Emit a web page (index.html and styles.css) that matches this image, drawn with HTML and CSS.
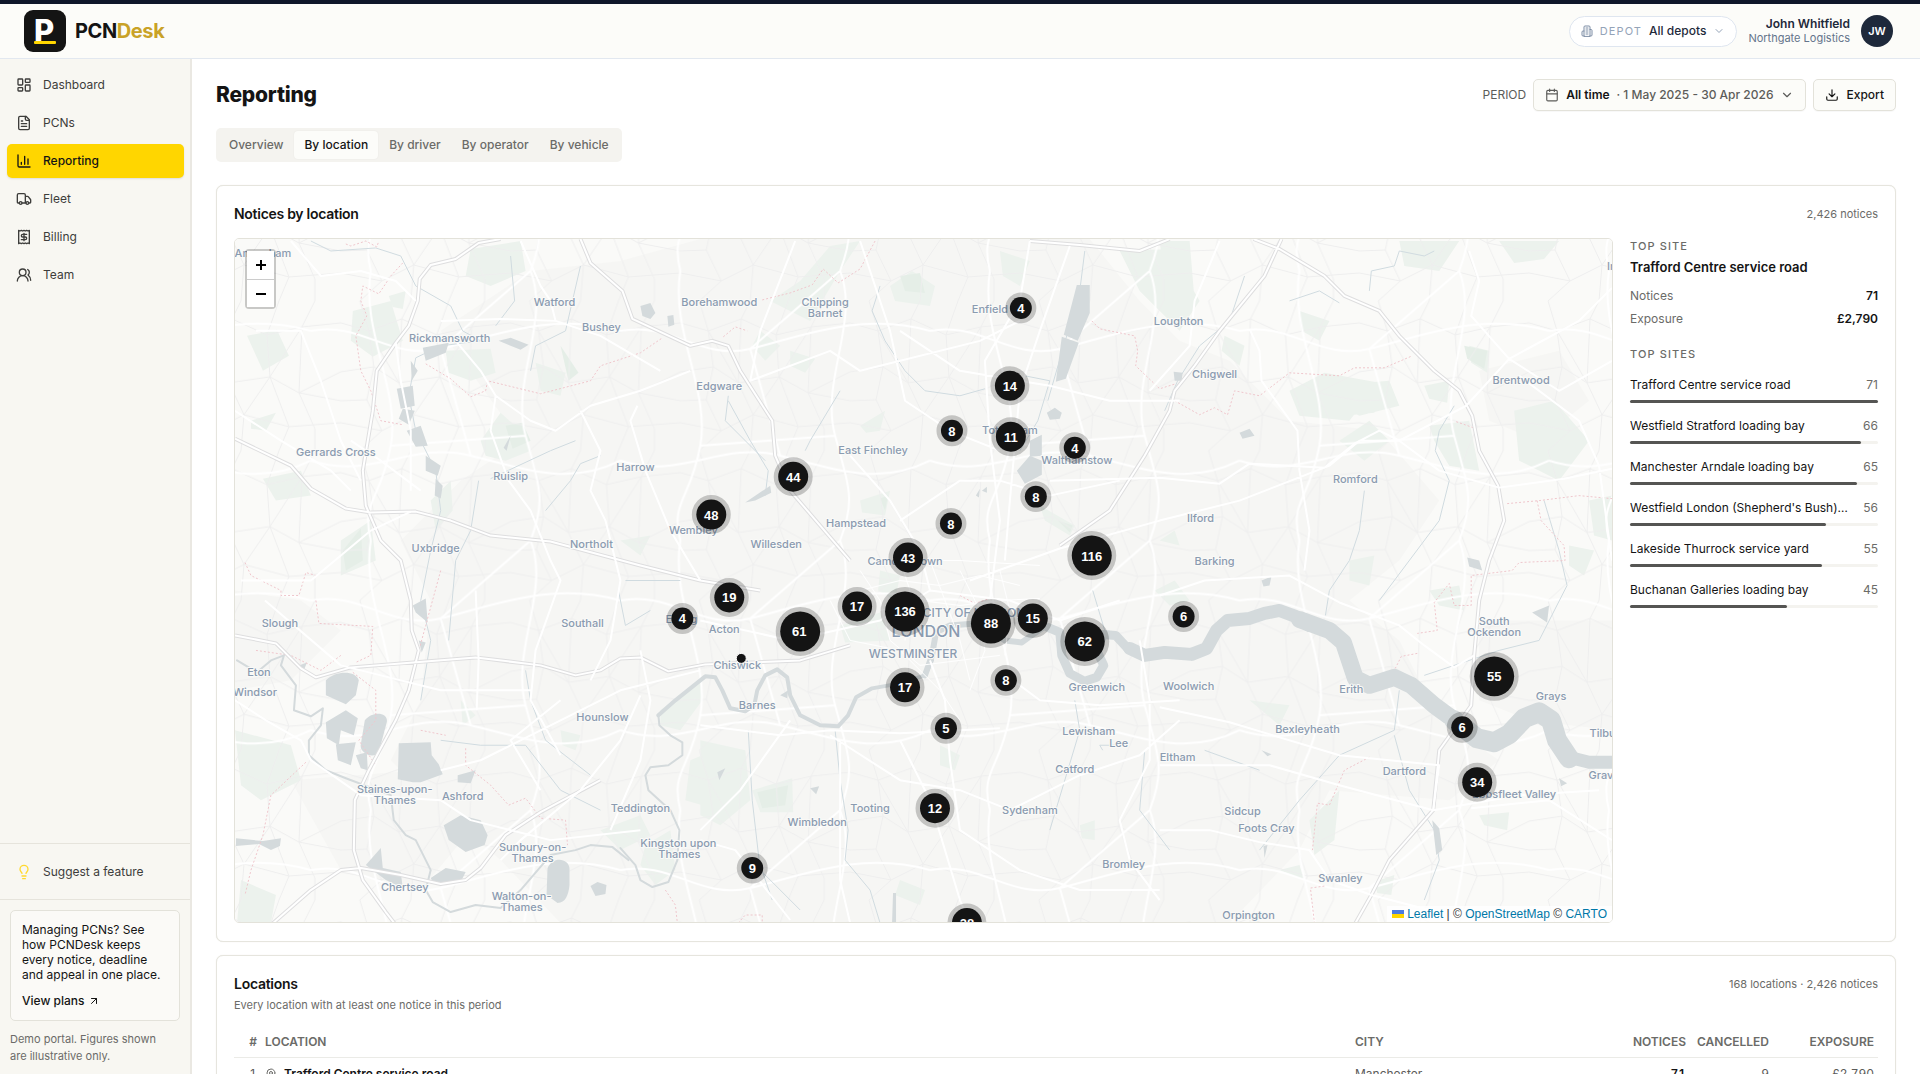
FILE: index.html
```html
<!DOCTYPE html>
<html lang="en">
<head>
<meta charset="utf-8">
<meta name="viewport" content="width=device-width, initial-scale=1">
<title>PCNDesk – Reporting by location</title>
<link rel="stylesheet" href="styles.css">
</head>
<body>
<svg class="sprite" aria-hidden="true">
  <symbol id="i-dash" viewBox="0 0 24 24"><rect x="3" y="3" width="7" height="9" rx="1"/><rect x="14" y="3" width="7" height="5" rx="1"/><rect x="14" y="12" width="7" height="9" rx="1"/><rect x="3" y="16" width="7" height="5" rx="1"/></symbol>
  <symbol id="i-file" viewBox="0 0 24 24"><path d="M15 2H6a2 2 0 0 0-2 2v16a2 2 0 0 0 2 2h12a2 2 0 0 0 2-2V7Z"/><path d="M14 2v4a2 2 0 0 0 2 2h4M10 9H8M16 13H8M16 17H8"/></symbol>
  <symbol id="i-chart" viewBox="0 0 24 24"><path d="M3 3v16a2 2 0 0 0 2 2h16M18 17V9M13 17V5M8 17v-3"/></symbol>
  <symbol id="i-truck" viewBox="0 0 24 24"><path d="M14 18V6a2 2 0 0 0-2-2H4a2 2 0 0 0-2 2v11a1 1 0 0 0 1 1h2M15 18H9M19 18h2a1 1 0 0 0 1-1v-3.65a1 1 0 0 0-.22-.62l-3.48-4.35A1 1 0 0 0 17.52 8H14"/><circle cx="17" cy="18" r="2"/><circle cx="7" cy="18" r="2"/></symbol>
  <symbol id="i-receipt" viewBox="0 0 24 24"><path d="M4 2v20l2-1 2 1 2-1 2 1 2-1 2 1 2-1 2 1V2l-2 1-2-1-2 1-2-1-2 1-2-1-2 1Z"/><path d="M16 8h-6a2 2 0 1 0 0 4h4a2 2 0 1 1 0 4H8M12 17.500V6.500"/></symbol>
  <symbol id="i-users" viewBox="0 0 24 24"><path d="M18 21a8 8 0 0 0-16 0"/><circle cx="10" cy="8" r="5"/><path d="M22 20c0-3.370-2-6.500-4-8a5 5 0 0 0-.45-8.300"/></symbol>
  <symbol id="i-bulb" viewBox="0 0 24 24"><path d="M15 14c.2-1 .7-1.700 1.500-2.500 1-.9 1.500-2.200 1.500-3.500A6 6 0 0 0 6 8c0 1 .2 2.200 1.500 3.500.7.7 1.300 1.500 1.500 2.500M9 18h6M10 22h4"/></symbol>
  <symbol id="i-building" viewBox="0 0 24 24"><path d="M6 22V4a2 2 0 0 1 2-2h8a2 2 0 0 1 2 2v18ZM6 12H4a2 2 0 0 0-2 2v6a2 2 0 0 0 2 2h2M18 9h2a2 2 0 0 1 2 2v9a2 2 0 0 1-2 2h-2M10 6h4M10 10h4M10 14h4M10 18h4"/></symbol>
  <symbol id="i-down" viewBox="0 0 24 24"><path d="m6 9 6 6 6-6"/></symbol>
  <symbol id="i-cal" viewBox="0 0 24 24"><path d="M8 2v4M16 2v4M3 10h18"/><rect x="3" y="4" width="18" height="18" rx="2"/></symbol>
  <symbol id="i-export" viewBox="0 0 24 24"><path d="M21 15v4a2 2 0 0 1-2 2H5a2 2 0 0 1-2-2v-4M7 10l5 5 5-5M12 15V3"/></symbol>
  <symbol id="i-out" viewBox="0 0 24 24"><path d="M7 7h10v10M7 17 17 7"/></symbol>
  <symbol id="i-pin" viewBox="0 0 24 24"><path d="M20 10c0 5-5.500 10.200-7.400 11.800a1 1 0 0 1-1.200 0C9.500 20.200 4 15 4 10a8 8 0 0 1 16 0"/><circle cx="12" cy="10" r="3"/></symbol>
</svg>

<header class="topbar">
  <a class="brand" href="#">
    <svg class="brand-mark" viewBox="0 0 42 42" aria-hidden="true"><rect width="42" height="42" rx="9" fill="#141414"/><text x="10" y="32" class="brand-letter">P</text><rect x="10" y="31" width="22" height="3" rx="1" fill="#ffd600"/></svg>
    <span class="brand-name">PCN<span>Desk</span></span>
  </a>
  <div class="account">
    <button class="depot" type="button"><svg class="icon"><use href="#i-building"/></svg><span class="depot-label">DEPOT</span><span class="depot-value">All depots</span><svg class="icon chev"><use href="#i-down"/></svg></button>
    <div class="user"><strong>John Whitfield</strong><span>Northgate Logistics</span></div>
    <span class="avatar">JW</span>
  </div>
</header>

<div class="shell">
  <aside class="sidebar">
    <nav class="nav" aria-label="Main">
      <a href="#"><svg class="icon"><use href="#i-dash"/></svg>Dashboard</a>
      <a href="#"><svg class="icon"><use href="#i-file"/></svg>PCNs</a>
      <a href="#" class="active" aria-current="page"><svg class="icon"><use href="#i-chart"/></svg>Reporting</a>
      <a href="#"><svg class="icon"><use href="#i-truck"/></svg>Fleet</a>
      <a href="#"><svg class="icon"><use href="#i-receipt"/></svg>Billing</a>
      <a href="#"><svg class="icon"><use href="#i-users"/></svg>Team</a>
    </nav>
    <div class="suggest"><a href="#"><svg class="icon"><use href="#i-bulb"/></svg>Suggest a feature</a></div>
    <div class="side-foot">
      <div class="promo">
        <p>Managing PCNs? See how PCNDesk keeps every notice, deadline and appeal in one place.</p>
        <a href="#">View plans <svg class="icon"><use href="#i-out"/></svg></a>
      </div>
      <p class="demo">Demo portal. Figures shown are illustrative only.</p>
    </div>
  </aside>

  <main class="main">
    <div class="page-head">
      <h1>Reporting</h1>
      <div class="tools">
        <span class="period-label" id="period">PERIOD</span>
        <button class="btn period" type="button" aria-describedby="period"><svg class="icon"><use href="#i-cal"/></svg><span class="strong">All time</span><span class="range">· 1 May 2025 - 30 Apr 2026</span><svg class="icon chev"><use href="#i-down"/></svg></button>
        <button class="btn" type="button"><svg class="icon"><use href="#i-export"/></svg>Export</button>
      </div>
    </div>

    <div class="tabs" role="tablist">
      <button type="button" role="tab">Overview</button>
      <button type="button" role="tab" class="active" aria-selected="true">By location</button>
      <button type="button" role="tab">By driver</button>
      <button type="button" role="tab">By operator</button>
      <button type="button" role="tab">By vehicle</button>
    </div>

    <section class="card">
      <div class="card-head"><h2>Notices by location</h2><span class="meta">2,426 notices</span></div>
      <div class="location-grid">
        <div class="map">
          <svg class="map-canvas" viewBox="234 238 1379 684" preserveAspectRatio="xMidYMid slice" role="img" aria-label="Map of notices across London">
            <defs>
              <pattern id="streets" width="170" height="150" patternUnits="userSpaceOnUse">
                <path class="lane" d="M0 22 28 30 61 18 96 34 131 26 170 22M0 71 33 66 58 82 99 76 128 92 170 71M0 122 41 130 73 114 118 126 170 122M19 0 28 30 33 66 26 99 41 130 19 150M61 18 70 0M61 18 58 82 73 114 70 150M96 34 108 0M96 34 99 76 118 126 108 150M131 26 144 0M131 26 128 92 144 128 144 150M28 30 58 82M99 76 131 26M73 114 99 76M128 92 170 100M0 100 26 99"/>
              </pattern>
              <pattern id="avenues" width="310" height="270" patternUnits="userSpaceOnUse">
                <path class="avenue" d="M0 60C50 50 80 90 130 78S240 40 310 60M0 190C60 210 100 170 160 185S260 215 310 190M60 0C50 60 90 120 80 175S50 230 60 270M220 0C240 50 200 110 215 165S235 230 220 270M130 78 160 185M80 175 215 165M130 78 220 0"/>
              </pattern>
            </defs>
            <rect x="234" y="238" width="1379" height="685" fill="#fafaf8"/>
            <path class="urban" d="M440 330 530 270 620 260 700 238H1090L1140 300 1180 340 1230 360 1290 420 1380 430 1440 500 1400 560 1350 600 1400 640 1440 720 1500 760 1450 800 1330 790 1300 850 1230 923H560L500 860 430 800 390 760 420 700 430 600 400 540 460 480 520 440ZM234 590 300 600 340 630 290 680 234 690ZM1480 370 1560 350 1590 400 1540 440 1490 420ZM1480 620 1613 620V730L1530 720 1480 700ZM290 780 420 770 470 830 420 890 340 870Z"/>
            <path class="green" d="M246 335 276 329 288 355 262 370ZM352 310 390 300 402 340 372 356 350 340ZM388 295 405 290 402 308 392 306ZM445 350 490 348 495 372 470 380 448 372ZM470 248 520 240 525 270 490 285 465 275ZM535 362 565 372 560 395 540 390ZM480 440 500 412 520 430 530 450 505 460 485 455ZM340 540 370 520 375 560 340 575ZM250 420 275 412 265 430 250 428ZM262 478 300 470 310 495 275 500ZM430 500 450 480 452 510 435 530ZM234 730 290 745 300 780 260 800 240 785ZM240 880 275 895 270 923H236ZM660 710 700 680 702 700 680 730 660 725ZM700 740 745 750 750 800 720 825 700 815ZM752 790 792 778 793 812 760 812ZM645 845 670 830 675 870 655 885 640 865ZM600 830 640 815 650 835 620 850ZM690 760 702 755 702 805 685 800ZM810 320 840 270 860 240 830 245 800 280 770 300ZM890 285 912 270 935 285 930 305 895 300ZM860 425 885 410 880 430 866 432ZM860 500 890 490 885 515 862 512ZM840 625 880 612 890 640 845 642ZM880 570 900 575 895 600 878 590ZM1040 505 1075 525 1070 535 1045 520ZM1120 250 1170 248 1200 300 1180 330 1140 290ZM1160 240H1190L1195 300 1170 320ZM1225 335 1245 345 1240 365 1222 350ZM1330 385 1390 380 1400 405 1360 415 1335 402ZM1350 400 1378 395 1375 412 1355 414ZM1290 390 1325 372 1380 382 1350 420 1300 415ZM1425 385 1450 380 1448 402 1430 398ZM1470 345 1490 350 1488 372 1472 362ZM1515 410 1555 400 1590 440 1560 480 1520 460ZM1430 425 1470 420 1480 470 1450 465 1435 440ZM1340 440 1370 420 1390 440 1365 460ZM1400 240 1460 240 1440 270 1405 265ZM1430 590 1460 585 1465 610 1440 605ZM1350 560 1375 555 1370 585 1350 580ZM1310 820 1340 790 1335 840 1315 855ZM1375 882 1395 875 1392 895 1378 893ZM1280 870 1300 865 1305 880ZM1155 590 1175 580 1190 600 1170 605ZM940 745 960 755 955 770 940 765ZM1080 825 1095 820 1095 840 1082 838ZM900 880 925 890 920 905 895 895ZM1160 540 1175 530 1180 545ZM1250 700 1290 705 1280 725ZM1480 815 1510 812 1508 830 1485 825ZM560 730 580 735 575 750 562 745ZM460 700 475 715 462 725ZM620 540 650 535 640 555ZM760 330 780 345 765 360 752 345ZM790 350 815 358 805 372 790 365ZM1000 250 1030 260 1020 285 1003 275ZM1300 310 1330 320 1320 340 1302 330ZM1590 500 1613 495V540L1595 535ZM1570 545 1595 550 1585 575 1570 565ZM1500 240 1560 240 1545 258 1515 262Z"/>
            <path class="green deep" d="M342 550 360 528 362 560 345 570ZM505 425 522 422 530 440 512 448ZM757 792 788 785 785 805 762 808ZM1465 345 1488 350 1485 368 1468 358ZM900 275 920 272 925 292 905 290ZM1058 520 1073 525 1070 532ZM880 498 888 495 885 510ZM560 345 578 372 568 380Z"/>
            <rect x="234" y="238" width="1379" height="685" fill="url(#streets)"/>
            <rect x="234" y="238" width="1379" height="685" fill="url(#avenues)"/>
            <path class="brook" d="M310 240 330 250 375 247 400 255 415 285 450 305 462 330 480 340M510 255 514 300 495 325M580 265 565 330 535 345 530 370M480 340 440 345 415 357 408 395 415 430 435 470 440 510 430 550 420 600 430 640 420 700M545 510 570 480 580 463 600 455M490 478 550 450 575 440M478 480 470 530 455 560 448 640M880 285 872 310 885 340 905 370 925 390 960 395 985 388M840 390 810 440 805 450M728 400 750 440 768 470 765 495M728 395 725 420 765 460M1025 375 1050 380 1038 420 1020 450M1085 250 1080 290 1048 400M1245 275 1230 320 1200 345 1178 380 1165 410M1290 300 1320 290 1340 302M1370 290 1372 270 1395 265 1400 250 1425 255 1435 250M1455 405 1440 430 1436 450 1450 480 1440 520 1380 600M1365 490 1360 530 1350 560 1330 590 1326 615M1545 500 1560 550 1568 585 1540 640 1500 650 1425 675M1400 690 1395 730 1340 755 1300 800 1260 850M1395 735 1410 790 1435 830 1440 860 1425 900M1093 590 1105 630M1075 700 1080 730 1068 770 1050 830M1145 750 1140 810 1170 850M835 730 840 780 848 830 845 860 870 890 880 923M748 730 752 800 760 870 800 910M618 590 625 625 650 610M525 670 530 700 545 740 590 775M440 740 480 745 525 745 560 790 600 810M1205 750 1260 770M1120 745H1100L1103 750M625 580H680M760 865 772 900"/>
            <path class="water" d="M422 347 448 342 445 352 425 360ZM410 360 417 370 411 380ZM396 388 412 385 414 405 400 408ZM402 408 414 410 408 424 398 418ZM406 430 420 425 427 445 415 446ZM425 455 440 465 437 475 425 470ZM435 478 442 485 440 498 434 495ZM498 340 510 337 528 344 520 349ZM640 305 650 302 655 312 650 318 642 315ZM667 315 673 314 674 324 668 326ZM503 447 510 435 506 450ZM325 680C335 670 355 670 358 680L355 695 345 704 325 695ZM364 720C372 710 388 712 386 722L378 752C372 760 358 752 360 744ZM398 743 430 742 431 755 438 764 442 774 420 782H412L397 779ZM325 722 345 710 357 718 353 735 340 730 338 745 326 738ZM335 744 355 742 350 765 337 760ZM355 755 366 752 367 770 360 768ZM443 825 460 815 480 820 487 835 484 845 465 852 448 840ZM547 868C552 855 570 858 569 870V885C568 895 565 903 557 903L546 895ZM590 886 597 882 606 885 605 894 595 896ZM457 775 475 770 470 783 457 782ZM365 865 380 848 382 868 400 872 402 888 385 880ZM430 878 445 868 465 872 460 882 432 882ZM412 605 425 598 427 622 415 612ZM418 640 425 642 421 652ZM298 665 306 662 303 670ZM235 838 262 841 280 838 279 846 270 850 258 844 235 846ZM745 502 770 485 771 492 755 500ZM1077 284H1090V312L1078 340 1064 334ZM1062 336 1079 342 1066 378 1056 381ZM1047 412 1055 407 1062 412 1060 418 1050 419ZM1030 440 1042 434V455L1030 456ZM1017 470 1030 455 1042 460V474L1025 483ZM976 495 980 488 979 497ZM982 490 987 486V492ZM1240 432 1250 428 1255 435 1243 438ZM780 695 788 690 787 698ZM1468 557 1480 560 1483 570 1470 566ZM1262 580 1272 576 1270 585 1264 586ZM1174 371 1183 372 1182 380 1175 380ZM1533 612 1550 605 1548 622ZM1262 750 1272 754 1268 756ZM1264 846 1268 845 1265 858ZM1433 820 1440 828 1443 850 1437 855ZM1560 778 1568 783 1562 786ZM717 772 725 768 719 780ZM810 788 819 786 816 794ZM893 893H896V923H892Z"/>
            <path class="river w2" d="M236 660 256 672 270 660 283 655 280 665 295 685 293 710 310 716 322 708 320 725 308 740 308 755 325 770 345 778 390 795 393 820 405 835 415 840 430 870 425 890 432 902 450 912 475 905 500 908 520 890 550 855 575 850 590 845 612 847 628 860"/>
            <path class="river w2" d="M620 848 635 865 640 880 652 887 668 882 677 860 679 830 670 810 648 790 645 775 650 767 668 765 682 755 682 742 670 735 659 725 658 715 675 700 705 676"/>
            <path class="river w4" d="M658 715 675 700 705 676 715 677 722 690 730 708 745 711 754 705 757 690 765 675 777 669 787 677 790 695 800 715 820 725 838 726 848 715 856 697 872 688 900 683 925 675 932 660"/>
            <path class="river w6" d="M925 675 932 655 936 632 950 625 975 623 990 630 1005 640 1022 642 1033 634 1045 626 1055 630"/>
            <path class="river w9" d="M1048 627 1060 632 1062 655 1070 673 1085 681 1097 677 1104 665 1096 648 1104 634 1116 635 1128 648 1142 655 1165 652"/>
            <path class="river w13" d="M1130 648 1145 655 1165 652 1192 654 1207 648 1217 630 1228 620 1250 618 1265 613 1280 610 1296 616 1310 625"/>
            <path class="river w17" d="M1300 619 1330 630 1344 642 1350 660 1356 678 1370 685 1395 677 1412 685 1435 705 1450 716 1468 728"/>
            <path class="river w20" d="M1455 720 1478 738 1495 742 1510 734 1525 718 1540 712 1552 720 1558 740 1570 758"/>
            <path class="river w13" d="M1560 745 1570 757 1590 762 1616 762"/>
            <path class="boundary" d="M345 243 350 245 365 240 376 246 378 240M402 262 390 275 378 293 362 285 360 300 366 315 355 335 360 370 370 390 380 420 402 424M425 363 450 378 470 396 485 390 487 380 540 393 590 380 600 365 640 352 662 337M762 299 790 292 812 284 823 268 838 282 860 268 875 240M723 336 735 326 747 330M1092 320 1100 328 1135 335 1138 350 1136 365 1160 388 1176 383M1175 400 1200 414 1215 407 1228 414 1235 390 1260 395 1290 372 1340 375 1355 367 1385 367 1413 355M1457 421 1477 428M1508 503 1540 500 1580 495 1613 498M1538 500 1542 520 1565 545 1566 560 1520 562 1513 570 1472 575 1472 605 1455 605 1450 583 1435 602 1438 630 1418 633M1418 653 1402 656 1396 668M1370 757 1345 770 1330 805 1318 803 1313 850M1325 886 1311 888 1315 923M244 562 250 575 280 590 280 595 298 595 305 572 315 575M315 600 318 623 372 626 370 655 355 662M255 650 290 655 320 670 340 655M352 672 375 690 375 720 358 740 375 765M305 762 270 795 262 835 250 870 244 895M440 570 425 625 410 680M420 730 445 735M465 748 465 765 490 785 508 805 525 798 540 818 565 820 567 845M665 890 675 905 677 923M738 923 745 915 762 915V923M960 595 975 603 990 598"/>
            <g class="roads">
              <path id="majors" d="M234 438 290 465 310 488 345 508 370 512 415 511 450 520 490 535 550 541 640 565 700 580 760 590M500 238 478 242 455 258 430 264 419 278 417 300 408 325 395 342 376 370 372 410 362 470 365 505 380 540 400 560 410 600 411 630 418 650 408 690 395 720 368 770 354 800 353 850 362 880 385 912 395 925M270 925 310 890 340 870 360 868 400 875 440 884 465 880 480 868 505 835 540 812 600 780M234 635 275 643 300 668 315 677 350 667 400 663 475 657 540 665 575 675 600 670 620 658 640 657 668 671 705 664 800 660 850 645M580 238 590 262 622 290 632 318 690 345 712 340 728 345 740 370 772 420 775 455 790 490 850 560M1030 240 1080 244 1140 250 1170 238M1254 238 1280 248 1325 275 1345 295 1380 310 1400 335 1435 370 1460 390 1473 415 1480 450 1499 485 1505 520 1490 560 1480 600 1475 655 1472 705 1440 750 1434 810 1390 860 1372 895 1355 925M1282 238 1265 275 1220 330 1195 365 1175 390 1170 410 1145 455 1110 510 1060 545"/>
              <use href="#majors" class="fill"/>
            </g>
            <path class="primary" d="M1613 287 1580 320 1510 358 1467 405 1400 440 1360 440 1330 465 1240 500 1160 520 1060 548 970 580M1613 468 1565 478 1500 487 1440 470 1400 440 1380 430 1355 443 1325 467 1250 463 1220 483 1160 477 1050 480M1250 328 1260 350 1262 380 1298 430 1300 470 1310 530 1305 570M1160 595 1205 580 1290 575 1340 602 1400 625 1425 645 1455 667 1475 655M1160 707 1230 722 1340 755 1440 765 1434 810 1340 785 1270 765 1160 765M1472 808 1550 800 1613 840M1434 810 1520 795 1600 790M1160 830 1210 830 1260 842 1310 850 1330 880 1372 895 1430 910M1520 375 1580 420 1600 465 1613 560M1470 250 1480 280 1472 315 1510 358 1560 390 1613 360M520 240 540 285 550 300 555 320M440 320 500 318 555 320 600 335 660 370M455 340 480 370 495 395 490 430 508 480 530 510 550 560 560 580 535 650 530 700 560 755M495 395 530 420 555 430 590 405 640 390 690 370M580 410 600 450 590 490 605 520 620 580 610 640 590 680M637 405 630 420 645 470 670 530 700 580M240 580 310 580 370 530 410 511M264 600 340 665 400 680 440 690 530 690M234 700 265 720 300 740 310 760 360 795 440 800 470 820 550 840 640 830M475 590 478 660 476 710M440 770 480 760 560 720 620 690 700 670M560 700 510 740 540 790M640 695 620 740 580 790 520 840 500 860M860 240 890 330 905 400 950 430 1000 450M795 240 760 330 750 380 830 350 860 370 980 340 1020 320M1030 240 1020 300 985 360 990 440 1000 520 990 600M1070 245 1040 330 1020 390 1010 500 1005 560M900 330 960 370 1050 385 1110 400 1180 400M850 455 890 500 920 550 930 590M900 520 960 480 1000 480 1050 495 1120 480M700 620 790 640 880 620 930 590 1010 600 1060 620 1120 600M700 725 780 735 830 730 900 733 1000 728M790 920 735 850 700 840M790 720 740 790 700 830M830 735 900 780 960 790 1010 810 1080 775 1140 755 1180 720M930 660 945 700 950 760 960 830 1020 870 1080 890 1160 890M1000 670 1040 700 1100 705 1180 700M1140 640 1150 700 1150 760 1120 820 1130 860 1160 900M840 740 840 880 850 923M900 740 930 800 960 900 970 923M1220 240 1195 300 1190 345 1150 390M290 240 320 275 360 270 395 280 415 300M255 330 300 330 320 380 340 440 360 480M234 410 280 440 330 470 350 490M395 342 400 380 410 430 410 490M350 440 380 460 420 490M640 650 650 700 640 760 610 830"/>
            <path class="primary core" d="M860 590 900 580 940 585 980 575 1020 585M880 610 920 600 960 605 1000 600 1040 598M930 560 945 600 960 640 970 680M960 570 980 610 985 650 970 690M860 570 880 600 890 640 920 665 960 660 1000 655M1000 570 1010 610 1005 655M900 560 910 590 905 640M830 600 850 640 900 650 940 690 960 720M880 560 960 560 1040 565"/>

            <g class="places">
              <text x="262" y="256">Amersham</text><text x="554" y="305">Watford</text><text x="601" y="330">Bushey</text><text x="449" y="341">Rickmansworth</text><text x="719" y="305">Borehamwood</text><text x="825" y="305">Chipping</text><text x="825" y="316">Barnet</text><text x="990" y="312">Enfield</text><text x="1179" y="324">Loughton</text><text x="1215" y="377">Chigwell</text><text x="1522" y="383">Brentwood</text><text x="719" y="389">Edgware</text><text x="335" y="455">Gerrards Cross</text><text x="510" y="479">Ruislip</text><text x="635" y="470">Harrow</text><text x="1010" y="433">Tottenham</text><text x="1077" y="463">Walthamstow</text><text x="873" y="453">East Finchley</text><text x="856" y="526">Hampstead</text><text x="776" y="547">Willesden</text><text x="693" y="533">Wembley</text><text x="591" y="547">Northolt</text><text x="435" y="551">Uxbridge</text><text x="905" y="564">Camden Town</text><text x="1356" y="482">Romford</text><text x="1201" y="521">Ilford</text><text x="1215" y="564">Barking</text><text x="1639" y="269">Ingatestone</text>
              <text x="279" y="627">Slough</text><text x="258" y="676">Eton</text><text x="254" y="696">Windsor</text><text x="582" y="627">Southall</text><text x="681" y="623">Ealing</text><text x="602" y="721">Hounslow</text><text x="394" y="793">Staines-upon-</text><text x="394" y="804">Thames</text><text x="462" y="800">Ashford</text><text x="640" y="812">Teddington</text><text x="532" y="851">Sunbury-on-</text><text x="532" y="862">Thames</text><text x="404" y="891">Chertsey</text><text x="521" y="900">Walton-on-</text><text x="521" y="911">Thames</text><text x="678" y="847">Kingston upon</text><text x="679" y="858">Thames</text>
              <text x="724" y="633">Acton</text><text x="737" y="669">Chiswick</text><text x="757" y="709">Barnes</text><text x="974" y="617" class="district">CITY OF LONDON</text><text x="926" y="637" class="capital">LONDON</text><text x="913" y="658" class="district">WESTMINSTER</text><text x="1097" y="691">Greenwich</text><text x="1189" y="690">Woolwich</text><text x="1089" y="735">Lewisham</text><text x="1119" y="747">Lee</text><text x="1178" y="761">Eltham</text><text x="1075" y="773">Catford</text><text x="870" y="812">Tooting</text><text x="817" y="826">Wimbledon</text><text x="1030" y="814">Sydenham</text><text x="1124" y="868">Bromley</text><text x="1243" y="815">Sidcup</text><text x="1267" y="832">Foots Cray</text><text x="1341" y="882">Swanley</text><text x="1249" y="919">Orpington</text><text x="1405" y="775">Dartford</text><text x="1308" y="733">Bexleyheath</text><text x="1352" y="693">Erith</text><text x="1552" y="700">Grays</text><text x="1495" y="625">South</text><text x="1495" y="636">Ockendon</text><text x="1609" y="737">Tilbury</text><text x="1618" y="779">Gravesend</text><text x="1515" y="798">Ebbsfleet Valley</text>
            </g>

            <g class="clusters">
              <circle cx="1021" cy="307" r="11"/><circle cx="952" cy="430" r="11"/><circle cx="1075" cy="447" r="11"/><circle cx="1036" cy="496" r="11"/><circle cx="951" cy="523" r="11"/><circle cx="1006" cy="680" r="11"/><circle cx="946" cy="728" r="11"/><circle cx="752" cy="868" r="11"/><circle cx="682" cy="618" r="11"/><circle cx="1184" cy="616" r="11"/><circle cx="1463" cy="727" r="11"/>
              <circle cx="1010" cy="385" r="15"/><circle cx="1011" cy="436" r="15"/><circle cx="793" cy="476" r="15"/><circle cx="711" cy="514" r="15"/><circle cx="908" cy="557" r="15"/><circle cx="729" cy="597" r="15"/><circle cx="857" cy="606" r="15"/><circle cx="1033" cy="618" r="15"/><circle cx="905" cy="687" r="15"/><circle cx="935" cy="808" r="15"/><circle cx="967" cy="923" r="15"/><circle cx="1478" cy="782" r="15"/>
              <circle cx="1092" cy="555" r="20"/><circle cx="800" cy="631" r="20"/><circle cx="905" cy="611" r="20"/><circle cx="991" cy="623" r="20"/><circle cx="1085" cy="641" r="20"/><circle cx="1495" cy="676" r="20"/>
            </g>
            <circle class="dot" cx="741" cy="658" r="5"/>
            <g class="counts">
              <text x="1021" y="312">4</text><text x="952" y="435">8</text><text x="1075" y="452">4</text><text x="1036" y="501">8</text><text x="951" y="528">8</text><text x="1006" y="685">8</text><text x="946" y="733">5</text><text x="752" y="873">9</text><text x="682" y="623">4</text><text x="1184" y="621">6</text><text x="1463" y="732">6</text>
              <text x="1010" y="390">14</text><text x="1011" y="441">11</text><text x="793" y="481">44</text><text x="711" y="519">48</text><text x="908" y="562">43</text><text x="729" y="602">19</text><text x="857" y="611">17</text><text x="1033" y="623">15</text><text x="905" y="692">17</text><text x="935" y="813">12</text><text x="967" y="928">28</text><text x="1478" y="787">34</text>
              <text x="1092" y="560">116</text><text x="799" y="636">61</text><text x="905" y="616">136</text><text x="991" y="628">88</text><text x="1085" y="646">62</text><text x="1495" y="681">55</text>
            </g>
          </svg>
          <div class="zoom"><button type="button" aria-label="Zoom in"><svg class="icon" viewBox="0 0 12 12"><path d="M6 1v10M1 6h10"/></svg></button><button type="button" aria-label="Zoom out"><svg class="icon" viewBox="0 0 12 12"><path d="M1 6h10"/></svg></button></div>
          <div class="credit"><svg viewBox="0 0 12 8" aria-hidden="true"><path fill="#4c7be1" d="M0 0h12v4H0z"/><path fill="#ffd500" d="M0 4h12v4H0z"/></svg> <a href="#">Leaflet</a> | © <a href="#">OpenStreetMap</a> © <a href="#">CARTO</a></div>
        </div>

        <div class="sites">
          <h3>TOP SITE</h3>
          <p class="top-name">Trafford Centre service road</p>
          <dl>
            <div><dt>Notices</dt><dd>71</dd></div>
            <div><dt>Exposure</dt><dd>£2,790</dd></div>
          </dl>
          <h3>TOP SITES</h3>
          <ol>
            <li><div class="row"><span>Trafford Centre service road</span><b>71</b></div><div class="bar"><i style="width:100%"></i></div></li>
            <li><div class="row"><span>Westfield Stratford loading bay</span><b>66</b></div><div class="bar"><i style="width:93%"></i></div></li>
            <li><div class="row"><span>Manchester Arndale loading bay</span><b>65</b></div><div class="bar"><i style="width:91.500%"></i></div></li>
            <li><div class="row"><span>Westfield London (Shepherd's Bush) service yard</span><b>56</b></div><div class="bar"><i style="width:79%"></i></div></li>
            <li><div class="row"><span>Lakeside Thurrock service yard</span><b>55</b></div><div class="bar"><i style="width:77.500%"></i></div></li>
            <li><div class="row"><span>Buchanan Galleries loading bay</span><b>45</b></div><div class="bar"><i style="width:63.400%"></i></div></li>
          </ol>
        </div>
      </div>
    </section>

    <section class="card">
      <div class="card-head"><h2>Locations</h2><span class="meta">168 locations · 2,426 notices</span></div>
      <p class="sub">Every location with at least one notice in this period</p>
      <table>
        <colgroup><col class="c-rank"><col><col class="c-city"><col class="c-notices"><col class="c-cancelled"><col class="c-exposure"></colgroup>
        <thead><tr><th class="num">#</th><th>LOCATION</th><th>CITY</th><th class="num">NOTICES</th><th class="num">CANCELLED</th><th class="num">EXPOSURE</th></tr></thead>
        <tbody><tr><td class="num">1</td><td class="site"><svg class="icon"><use href="#i-pin"/></svg>Trafford Centre service road</td><td>Manchester</td><td class="num total">71</td><td class="num">9</td><td class="num">£2,790</td></tr></tbody>
      </table>
    </section>
  </main>
</div>
</body>
</html>
```
FILE: styles.css
```css
* { box-sizing: border-box; }
body {
  margin: 0;
  height: 100vh;
  display: flex;
  flex-direction: column;
  overflow: hidden;
  border-top: 4px solid #0f172a;
  background: #fff;
  color: #141414;
  font: 12px/16px Inter, "Liberation Sans", sans-serif;
}
h1, h2, h3, p, dl, dd, ol { margin: 0; padding: 0; }
a { color: inherit; text-decoration: none; }
button { font: inherit; color: inherit; cursor: pointer; }
.sprite { position: absolute; width: 0; height: 0; }
.icon {
  width: 16px;
  height: 16px;
  flex: none;
  fill: none;
  stroke: currentColor;
  stroke-width: 2;
  stroke-linecap: round;
  stroke-linejoin: round;
}

/* Top bar */
.topbar {
  flex: none;
  height: 55px;
  padding: 0 27px 0 24px;
  display: flex;
  align-items: center;
  justify-content: space-between;
  background: #fcfcf9;
  border-bottom: 1px solid #e2e8f0;
}
.brand { display: flex; align-items: center; gap: 9px; }
.brand-mark { width: 42px; height: 42px; }
.brand-letter { font: 800 31px Inter, sans-serif; fill: #fff; }
.brand-name { font-size: 20px; font-weight: 700; line-height: 24px; letter-spacing: -0.02em; }
.brand-name span { color: #c9a227; }
.account { display: flex; align-items: center; gap: 11px; }
.depot {
  height: 31px;
  padding: 0 11px;
  display: flex;
  align-items: center;
  gap: 7px;
  background: #fff;
  border: 1px solid #dfe6f0;
  border-radius: 16px;
  color: #1e293b;
}
.depot .icon { width: 12px; height: 12px; color: #7d8da5; }
.depot .chev { color: #94a3b8; }
.depot-label { color: #94a3b8; font-size: 11px; letter-spacing: 0.1em; }
.depot-value { font-weight: 500; }
.user { display: flex; flex-direction: column; text-align: right; color: #64748b; font-size: 11px; line-height: 15px; }
.user strong { font-size: 12px; font-weight: 600; color: #1e293b; }
.avatar {
  width: 32px;
  height: 32px;
  border-radius: 50%;
  display: grid;
  place-items: center;
  background: #1e293b;
  color: #fff;
  font-size: 11px;
  font-weight: 600;
}

/* Shell */
.shell { flex: 1; min-height: 0; display: flex; }
.sidebar {
  flex: none;
  width: 192px;
  display: flex;
  flex-direction: column;
  background: #f8f7f2;
  border-right: 2px solid #eae8e2;
}
.nav { flex: 1; padding: 9px 6px 0 7px; display: flex; flex-direction: column; gap: 4px; }
.nav a, .suggest a {
  height: 34px;
  padding: 0 9px;
  display: flex;
  align-items: center;
  gap: 11px;
  border-radius: 5px;
  color: #3d3d3b;
}
.nav a.active { background: #ffd600; color: #141414; font-weight: 500; box-shadow: 0 1px 2px rgba(0, 0, 0, 0.1); }
.suggest { padding: 11px 7px 10px; border-top: 1px solid #e6e4dc; border-bottom: 1px solid #e6e4dc; }
.suggest .icon { color: #ffd92e; }
.side-foot { padding: 10px 10px 9px; }
.promo { padding: 11px; border: 1px solid #e3e2da; border-radius: 5px; background: #fbfaf7; line-height: 15px; }
.promo p { margin-bottom: 11px; }
.promo a { display: flex; align-items: center; gap: 4px; font-weight: 500; line-height: 16px; }
.promo .icon { width: 12px; height: 12px; }
.demo { margin-top: 10px; padding-right: 12px; color: #6b6b68; font-size: 11px; line-height: 17px; }

.main { flex: 1; min-width: 0; padding: 20px 24px; overflow-y: auto; scrollbar-width: none; }
.page-head { display: flex; align-items: center; justify-content: space-between; }
h1 { font-size: 21px; font-weight: 800; line-height: 24px; letter-spacing: -0.01em; }
.tools { display: flex; align-items: center; gap: 7px; }
.period-label { color: #5c5c5a; }
.btn {
  height: 32px;
  padding: 0 11px;
  display: flex;
  align-items: center;
  gap: 7px;
  background: #fcfcf9;
  border: 1px solid #e3e2da;
  border-radius: 5px;
  font-weight: 500;
  box-shadow: 0 1px 1px rgba(0, 0, 0, 0.03);
}
.btn .icon { width: 14px; height: 14px; }
.period .icon { color: #5c5c5a; }
.range { color: #5c5c5a; }
.strong { font-weight: 600; }

.tabs { width: max-content; margin: 17px 0 23px; padding: 3px; display: flex; gap: 1px; background: #f4f3ef; border-radius: 5px; }
.tabs button { height: 28px; padding: 0 10px; border: 0; border-radius: 4px; background: none; color: #6b6b68; font-weight: 500; }
.tabs .active { background: #fcfcf9; color: #141414; box-shadow: 0 0 2px rgba(0, 0, 0, 0.06); }

/* Cards */
.card { margin-bottom: 13px; padding: 18px 17px; border: 1px solid #e6e5de; border-radius: 7px; background: #fff; box-shadow: 0 0 1px #e3e2da; }
.card-head { display: flex; align-items: center; justify-content: space-between; line-height: 20px; }
h2 { font-size: 14px; font-weight: 600; letter-spacing: -0.02em; }
.meta { color: #6b6b68; font-size: 11px; }
.location-grid { margin-top: 14px; display: grid; grid-template-columns: minmax(0, 1fr) 248px; gap: 17px; }
.map { position: relative; align-self: start; overflow: hidden; border: 1px solid #e3e2da; border-radius: 5px; }
.map-canvas { display: block; width: 100%; height: auto; }
.urban { fill: #f6f6f4; }
.green { fill: #ecf2ed; }
.green.deep { fill: #e5eee7; }
.water { fill: #d4dadc; }
.lane { fill: none; stroke: #eeeeee; }
.avenue { fill: none; stroke: #fff; stroke-width: 2; }
.brook { fill: none; stroke: #d0dbe0; stroke-linejoin: round; }
.river { fill: none; stroke: #d4dadc; stroke-linejoin: round; stroke-linecap: round; }
.w2 { stroke-width: 2; }
.w4 { stroke-width: 4; }
.w6 { stroke-width: 6; }
.w9 { stroke-width: 9; }
.w13 { stroke-width: 13; }
.w17 { stroke-width: 17; }
.w20 { stroke-width: 20; }
.boundary { fill: none; stroke: #efc6cc; stroke-dasharray: 2 2; }
.roads { fill: none; stroke: #dededf; stroke-width: 4; stroke-linejoin: round; }
.roads .fill { stroke: #fff; stroke-width: 2; }
.primary { fill: none; stroke: #fff; stroke-width: 2; stroke-linejoin: round; }
.core { stroke-width: 1; }
.places text {
  font: 500 11px Inter, sans-serif;
  fill: #8a9bb0;
  stroke: #fafaf8;
  stroke-width: 2;
  stroke-linejoin: round;
  paint-order: stroke;
  text-anchor: middle;
}
.places .district { font-size: 12px; }
.places .capital { font-size: 16px; }
.clusters circle { fill: #141414; stroke: rgba(20, 20, 20, 0.22); stroke-width: 9; paint-order: stroke; }
.dot { fill: #141414; stroke: #fff; stroke-width: 1; }
.counts text { font: 700 13px "Liberation Sans", Arial, sans-serif; fill: #fff; text-anchor: middle; }
.zoom {
  position: absolute;
  top: 10px;
  left: 10px;
  display: flex;
  flex-direction: column;
  border: 2px solid rgba(0, 0, 0, 0.2);
  border-radius: 4px;
  background-clip: padding-box;
}
.zoom button { width: 27px; height: 28px; padding: 0; display: grid; place-items: center; border: 0; background: #fff; color: #000; }
.zoom button + button { border-top: 1px solid #ccc; }
.zoom .icon { width: 12px; height: 12px; stroke-linecap: butt; }
.credit { position: absolute; right: 0; bottom: 0; padding: 0 5px; background: rgba(255, 255, 255, 0.8); color: #333; font: 12px/16px "Liberation Sans", Arial, sans-serif; }
.credit svg { width: 12px; height: 8px; }
.credit a { color: #0078a8; }

.sites { min-width: 0; }
.sites h3 { color: #6b6b68; font-size: 11px; font-weight: 500; line-height: 16px; letter-spacing: 0.1em; }
.top-name { margin: 3px 0 11px; font-size: 13px; font-weight: 600; line-height: 20px; }
.sites dl { margin-bottom: 19px; display: grid; gap: 7px; }
.sites dl div { display: flex; justify-content: space-between; }
.sites dt { color: #6b6b68; }
.sites dd { font-weight: 600; }
.sites ol { margin-top: 14px; display: flex; flex-direction: column; gap: 14px; list-style: none; }
.sites li { display: flex; flex-direction: column; gap: 6px; }
.row { display: flex; justify-content: space-between; gap: 12px; line-height: 18px; }
.row span { min-width: 0; overflow: hidden; white-space: nowrap; text-overflow: ellipsis; }
.row b { color: #6b6b68; font-weight: 400; }
.bar { height: 3px; border-radius: 2px; background: #f4f3ef; }
.bar i { display: block; height: 3px; border-radius: 2px; background: #555553; }

/* Locations table */
.sub { margin-top: 2px; color: #6b6b68; font-size: 11px; line-height: 18px; }
table { width: 100%; margin-top: 13px; table-layout: fixed; border-collapse: collapse; }
.c-rank { width: 27px; }
.c-city { width: 259px; }
.c-notices { width: 80px; }
.c-cancelled { width: 83px; }
.c-exposure { width: 105px; }
th, td { padding: 0 4px; text-align: left; }
th { height: 30px; color: #6b6b68; font-weight: 600; border-bottom: 1px solid #ebebe7; }
td { height: 34px; color: #5c5c5a; }
.num { text-align: right; font-variant-numeric: tabular-nums; }
.site, .total { color: #141414; font-weight: 600; }
.site .icon { width: 12px; height: 12px; margin-right: 7px; color: #6b6b68; vertical-align: -2px; }
```
